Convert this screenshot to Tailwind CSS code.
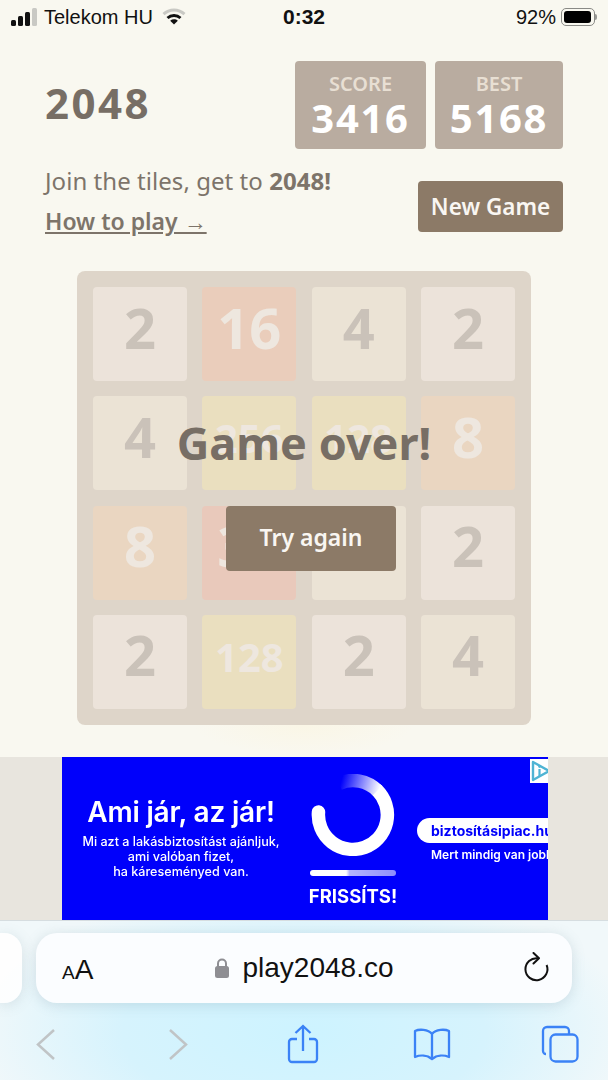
<!DOCTYPE html>
<html lang="en">
<head>
<meta charset="utf-8">
<title>2048</title>
<script src="https://cdn.jsdelivr.net/npm/@tailwindcss/browser@4"></script>
</head>
<body class="m-0">
<div class="w-[608px] h-[1080px] overflow-hidden flex flex-col bg-[#f9f8f0] font-['Noto_Sans',sans-serif]">

  <!-- status bar -->
  <div class="h-[34px] shrink-0 flex items-center pl-[11px] pr-[11px] text-[#111] font-['Liberation_Sans',sans-serif] text-[20px] relative">
    <svg width="27" height="18" viewBox="0 0 27 18" class="mr-[6px]"><rect x="0" y="12" width="5" height="6" rx="1.5" fill="#111"/><rect x="7" y="8" width="5" height="10" rx="1.5" fill="#111"/><rect x="14" y="4" width="5" height="14" rx="1.5" fill="#111"/><rect x="21" y="0" width="5" height="18" rx="1.5" fill="#c9c9c4"/></svg>
    <span>Telekom HU</span>
    <svg width="24" height="18" viewBox="0 0 24 18" class="ml-[9px]"><path d="M1.5 6.2C7.5 .6 16.5 .6 22.5 6.2" fill="none" stroke="#c9c9c4" stroke-width="3"/><path d="M5.5 10C9.2 6.7 14.8 6.7 18.5 10" fill="none" stroke="#111" stroke-width="3"/><path d="M8.2 12.7 12 16.5l3.8-3.8C13.6 10.9 10.4 10.9 8.2 12.7z" fill="#111"/></svg>
    <span class="absolute left-0 w-[608px] text-center font-bold text-[21px]">0:32</span>
    <span class="ml-auto mr-[5px]">92%</span>
    <div class="w-[34px] h-[18px] rounded-[5px] border border-[#8a8a86] p-[2px]"><div class="w-[27px] h-full rounded-[3px] bg-black"></div></div>
    <div class="w-[2px] h-[6px] bg-[#9a9a96] rounded-r-sm"></div>
  </div>

  <!-- header -->
  <div class="px-[45px] pt-[27px] flex justify-between items-center h-[115px] shrink-0">
    <h1 class="text-[42px] tracking-[2.5px] font-bold text-[#776e65] leading-none -mt-[4px]">2048</h1>
    <div class="flex gap-[9px]">
      <div class="w-[131px] h-[88px] rounded-[4px] bg-[#b9aca0] flex flex-col items-center pt-[10px]">
        <span class="text-[20px] leading-[26px] font-semibold text-[#e8dfd3]">SCORE</span>
        <span class="text-[40px] tracking-[1.7px] leading-[42px] font-bold text-white">3416</span>
      </div>
      <div class="w-[128px] h-[88px] rounded-[4px] bg-[#b9aca0] flex flex-col items-center pt-[10px]">
        <span class="text-[20px] leading-[26px] font-semibold text-[#e8dfd3]">BEST</span>
        <span class="text-[40px] tracking-[1.7px] leading-[42px] font-bold text-white">5168</span>
      </div>
    </div>
  </div>

  <div class="px-[45px] pt-[17px] flex justify-between items-start h-[122px] shrink-0">
    <div class="text-[#7d746a]">
      <p class="text-[24px] leading-[30px] tracking-[0.05px]">Join the tiles, get to <b class="font-bold">2048!</b></p>
      <p class="text-[23px] leading-[30px] mt-[10px] font-semibold underline">How to play →</p>
    </div>
    <div class="w-[145px] h-[51px] mt-[15px] rounded-[4px] bg-[#8c7a67] text-[#f9f6f2] text-[22.5px] font-semibold flex items-center justify-center">New Game</div>
  </div>

  <!-- board -->
  <div class="relative w-[454px] h-[454px] mx-auto shrink-0 rounded-[8px] bg-[#ded5c9] p-[16px] grid grid-cols-4 gap-[15.33px] content-start">
    <div class="h-[94px] pb-[15px] rounded-[4px] bg-[#ece3da] text-[#cac2b9] text-[56px] font-bold flex items-center justify-center">2</div>
    <div class="h-[94px] pb-[15px] rounded-[4px] bg-[#eacdbb] text-[#eee7df] text-[56px] font-bold flex items-center justify-center">16</div>
    <div class="h-[94px] pb-[15px] rounded-[4px] bg-[#ebe3d5] text-[#cac2b9] text-[56px] font-bold flex items-center justify-center">4</div>
    <div class="h-[94px] pb-[15px] rounded-[4px] bg-[#ece3da] text-[#cac2b9] text-[56px] font-bold flex items-center justify-center">2</div>

    <div class="h-[94px] pb-[15px] rounded-[4px] bg-[#ebe3d5] text-[#cac2b9] text-[56px] font-bold flex items-center justify-center">4</div>
    <div class="h-[94px] pb-[10px] rounded-[4px] bg-[#eadfbf] text-[#eee7df] text-[40px] font-bold flex items-center justify-center">256</div>
    <div class="h-[94px] pb-[10px] rounded-[4px] bg-[#eadfbf] text-[#eee7df] text-[40px] font-bold flex items-center justify-center">128</div>
    <div class="h-[94px] pb-[15px] rounded-[4px] bg-[#ead6c1] text-[#eee7df] text-[56px] font-bold flex items-center justify-center">8</div>

    <div class="h-[94px] pb-[15px] rounded-[4px] bg-[#ead6c1] text-[#eee7df] text-[56px] font-bold flex items-center justify-center">8</div>
    <div class="h-[94px] pb-[15px] rounded-[4px] bg-[#e9c9bb] text-[#eee7df] text-[56px] font-bold flex items-center justify-center">32</div>
    <div class="h-[94px] pb-[15px] rounded-[4px] bg-[#ebe3d5] text-[#cac2b9] text-[56px] font-bold flex items-center justify-center">4</div>
    <div class="h-[94px] pb-[15px] rounded-[4px] bg-[#ece3da] text-[#cac2b9] text-[56px] font-bold flex items-center justify-center">2</div>

    <div class="h-[94px] pb-[15px] rounded-[4px] bg-[#ece3da] text-[#cac2b9] text-[56px] font-bold flex items-center justify-center">2</div>
    <div class="h-[94px] pb-[10px] rounded-[4px] bg-[#eadfbf] text-[#eee7df] text-[40px] font-bold flex items-center justify-center">128</div>
    <div class="h-[94px] pb-[15px] rounded-[4px] bg-[#ece3da] text-[#cac2b9] text-[56px] font-bold flex items-center justify-center">2</div>
    <div class="h-[94px] pb-[15px] rounded-[4px] bg-[#ebe3d5] text-[#cac2b9] text-[56px] font-bold flex items-center justify-center">4</div>

    <!-- game over overlay -->
    <div class="absolute inset-0 flex flex-col items-center pt-[134px]">
      <p class="text-[45px] leading-[76px] font-bold text-[#776e65]">Game over!</p>
      <div class="mt-[25px] ml-[14px] w-[170px] h-[65px] pb-[3px] rounded-[4px] bg-[#8c7a67] text-[#f9f6f2] text-[23px] font-semibold flex items-center justify-center">Try again</div>
    </div>
  </div>

  <!-- glow gap under board -->
  <div class="h-[32px] shrink-0 bg-[radial-gradient(ellipse_110px_30px_at_50%_0%,#faf6e6,#f9f8f0)]"></div>

  <!-- ad strip -->
  <div class="h-[163px] shrink-0 bg-[#e8e5de] pl-[62px]">
    <div class="relative w-[486px] h-full bg-[#0000fb] overflow-hidden text-white font-['Inter',sans-serif]">
      <div class="absolute left-0 top-0 w-[238px] h-full flex flex-col items-center pt-[38px] blur-[0.4px]">
        <p class="text-[28px] leading-[34px] font-semibold tracking-[-0.2px] whitespace-nowrap">Ami jár, az jár!</p>
        <p class="mt-[5px] text-[12.6px] leading-[15px] font-medium text-center whitespace-nowrap">Mi azt a lakásbiztosítást ajánljuk,<br>ami valóban fizet,<br>ha káreseményed van.</p>
      </div>
      <div class="absolute left-[246px] top-[17px] w-[90px] flex flex-col items-center blur-[0.4px]">
        <svg width="84" height="82" viewBox="0 0 84 82">
          <defs><linearGradient id="ringfade" gradientUnits="userSpaceOnUse" x1="30" y1="8" x2="68" y2="18"><stop offset="0" stop-color="#0000fb"/><stop offset="1" stop-color="#fff"/></linearGradient></defs>
          <path d="M7.5 38A34.5 34.5 0 1 0 66.4 16.6" fill="none" stroke="#fff" stroke-width="13.500" stroke-linecap="round"/>
          <path d="M66.4 16.6A34.5 34.5 0 0 0 28 9.500" fill="none" stroke="url(#ringfade)" stroke-width="13.500"/>
        </svg>
        <div class="mt-[14px] w-[86px] h-[6px] rounded-full bg-[linear-gradient(90deg,#fff_42%,#b4b4fd_46%,#8e8efc)]"></div>
        <p class="mt-[8px] text-[18.500px] leading-[24px] font-bold whitespace-nowrap">FRISSÍTS!</p>
      </div>
      <div class="absolute left-[355px] top-[61px] w-[170px] blur-[0.4px]">
        <div class="h-[25px] rounded-full bg-white text-[#0000fb] text-[14px] leading-[25px] font-bold pl-[14px] whitespace-nowrap">biztosításipiac.hu</div>
        <p class="mt-[4px] pl-[14px] text-[12px] leading-[16px] font-semibold whitespace-nowrap">Mert mindig van jobb</p>
      </div>
      <div class="absolute right-0 top-[2px] w-[18px] h-[24px] bg-white overflow-hidden">
        <svg width="22" height="24" viewBox="0 0 22 24"><path d="M3 3 19 12 3 21z" fill="none" stroke="#4fb4d4" stroke-width="2.400" stroke-linejoin="round"/><path d="M9.500 10v7" stroke="#4fb4d4" stroke-width="2.200"/><circle cx="9.500" cy="7.600" r="1.300" fill="#4fb4d4"/></svg>
      </div>
    </div>
  </div>

  <!-- safari chrome -->
  <div class="flex-1 border-t border-[#d6dde0] bg-[radial-gradient(ellipse_330px_150px_at_50%_70%,#cdf3ff,#d6f3fd_55%,#f1f8fa)] pt-[12px]">
    <div class="flex gap-[14px] h-[70px]">
      <div class="w-[22px] h-full bg-white/90 rounded-r-[18px] shrink-0 shadow-[0_2px_14px_rgba(90,120,135,0.18)]"></div>
      <div class="relative w-[536px] h-full rounded-[21px] bg-[#fbfdff] shadow-[0_2px_14px_rgba(90,120,135,0.2)] flex items-center justify-center font-['Liberation_Sans',sans-serif] text-[#111]">
        <span class="absolute left-[26px] top-[22px] leading-[30px]"><span class="text-[19px]">A</span><span class="text-[28px]">A</span></span>
        <svg width="16" height="22" viewBox="0 0 16 22" class="mr-[12px]"><path d="M4 10V6.500a4 4 0 0 1 8 0V10" fill="none" stroke="#8e8e93" stroke-width="2"/><rect x="1" y="9" width="14" height="12" rx="2.500" fill="#8e8e93"/></svg>
        <span class="text-[28px] leading-[34px]">play2048.co</span>
        <svg width="28" height="32" viewBox="0 0 28 32" class="absolute right-[22px] top-[19px]"><path d="M16 6.300A11 11 0 1 0 24.600 13" fill="none" stroke="#111" stroke-width="2"/><path d="M11.500 1 17 6.300 11.500 11.500" fill="none" stroke="#111" stroke-width="2" stroke-linecap="round" stroke-linejoin="round"/></svg>
      </div>
    </div>
    <div class="mt-[21px] pl-[26px] pr-[28px] flex justify-between">
      <svg width="40" height="40" viewBox="0 0 40 40"><path d="M28 6 12 20.500 28 35" fill="none" stroke="#c0c4c6" stroke-width="2.500"/></svg>
      <svg width="40" height="40" viewBox="0 0 40 40"><path d="M15 6 31 20.500 15 35" fill="none" stroke="#c0c4c6" stroke-width="2.500"/></svg>
      <svg width="40" height="40" viewBox="0 0 40 40"><path d="M14 15H9a3 3 0 0 0-3 3v17a3 3 0 0 0 3 3h22a3 3 0 0 0 3-3V18a3 3 0 0 0-3-3h-5" fill="none" stroke="#3b82f6" stroke-width="2.300"/><path d="M20 27V2M12.500 9 20 2l7.500 7" fill="none" stroke="#3b82f6" stroke-width="2.300"/></svg>
      <svg width="40" height="40" viewBox="0 0 40 40"><path d="M20 10C16 5 7 5 3 7V33C8 31 15 31 20 35 25 31 32 31 37 33V7C33 5 24 5 20 10ZM20 10V35" fill="none" stroke="#3b82f6" stroke-width="2.300" stroke-linejoin="round"/></svg>
      <svg width="40" height="40" viewBox="0 0 40 40"><path d="M6 30a3 3 0 0 1-3-3V7a4 4 0 0 1 4-4h18a4 4 0 0 1 4 4v3" fill="none" stroke="#3b82f6" stroke-width="2.300"/><rect x="10.500" y="10.500" width="27" height="27" rx="5" fill="none" stroke="#3b82f6" stroke-width="2.300"/></svg>
    </div>
  </div>
</div>
</body>
</html>
